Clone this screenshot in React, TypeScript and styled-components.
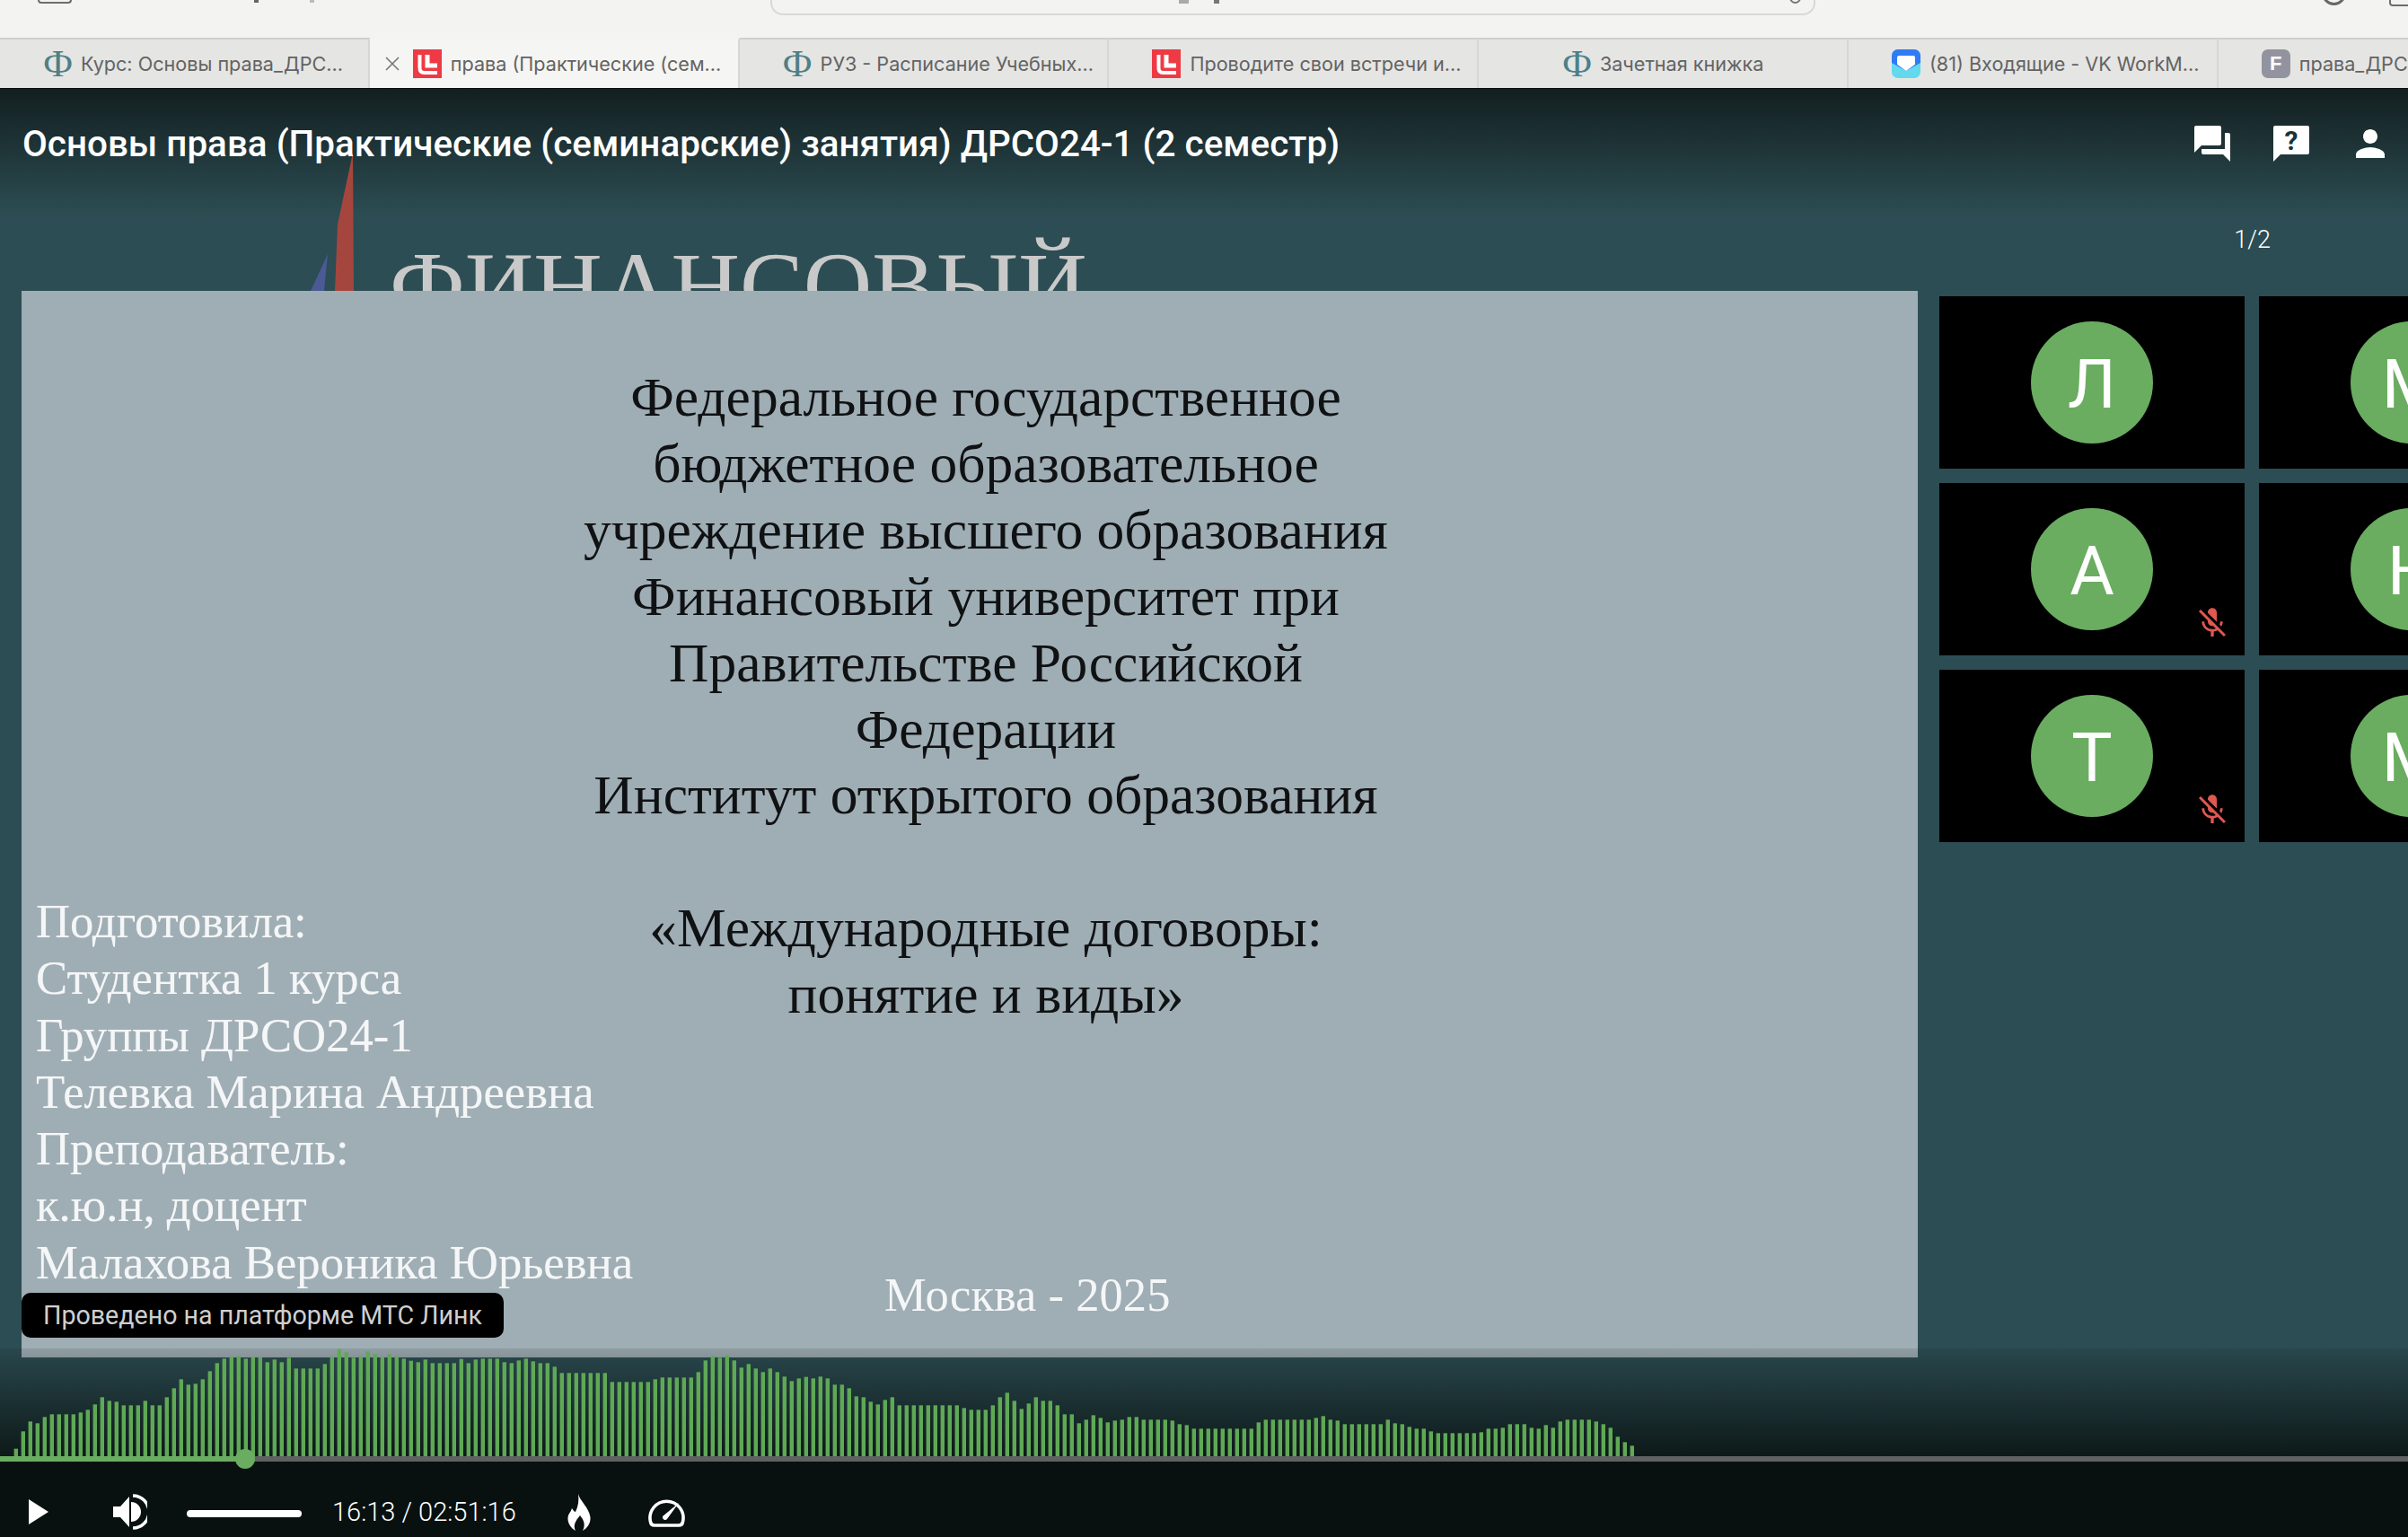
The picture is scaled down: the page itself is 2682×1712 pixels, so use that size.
import React from "react";
import styled, { createGlobalStyle } from "styled-components";
import { MdForum, MdPerson, MdMicOff } from "react-icons/md";

const Global = createGlobalStyle`
  html, body { margin: 0; padding: 0; width: 2682px; height: 1712px; overflow: hidden; background: #2c4c52; }
  * { box-sizing: border-box; }
`;

const Page = styled.div`
  width: 2682px;
  height: 1712px;
  display: flex;
  flex-direction: column;
  overflow: hidden;
  font-family: Roboto, "Liberation Sans", sans-serif;
`;

/* browser chrome */
const Chrome = styled.header`
  flex: 0 0 99px;
  display: flex;
  flex-direction: column;
  background: #f3f3f1;
  border-bottom: 1px solid #0b0f0f;
`;
const Toolbar = styled.div`
  flex: 0 0 42px;
  display: flex;
  align-items: flex-start;
  position: relative;
  overflow: hidden;
`;
const SidebarStub = styled.span`
  flex: none;
  width: 38px;
  height: 4px;
  margin-left: 42px;
  border: 2px solid #6d6d6d;
  border-top: 0;
  border-radius: 0 0 4px 4px;
`;
const Chevron = styled.span<{ $gap: number; $c: string }>`
  flex: none;
  width: 5px;
  height: 3px;
  margin-left: ${(p) => p.$gap}px;
  background: ${(p) => p.$c};
`;
const UrlBar = styled.div`
  flex: none;
  width: 1164px;
  height: 17px;
  margin-left: 508px;
  border: 2px solid #d8d8d6;
  border-top: 0;
  border-radius: 0 0 14px 14px;
  display: flex;
  align-items: flex-start;
  position: relative;
`;
const UrlBit = styled.span<{ $x: number; $w: number; $h: number; $c: string }>`
  position: absolute;
  left: ${(p) => p.$x}px;
  top: 0;
  width: ${(p) => p.$w}px;
  height: ${(p) => p.$h}px;
  background: ${(p) => p.$c};
`;
const Reload = styled.span`
  position: absolute;
  right: 14px;
  top: -9px;
  width: 13px;
  height: 13px;
  border: 2px solid #777;
  border-radius: 50%;
`;
const RoundStub = styled.span`
  flex: none;
  width: 27px;
  height: 27px;
  margin-top: -21px;
  margin-left: 564px;
  border: 3px solid #666;
  border-radius: 50%;
`;
const BoxStub = styled.span`
  flex: none;
  width: 40px;
  height: 7px;
  margin-left: 48px;
  border: 2px solid #6d6d6d;
  border-top: 0;
  border-radius: 0 0 4px 4px;
`;
const TabStrip = styled.nav`
  flex: 1;
  display: flex;
`;
const Tab = styled.div<{ $active?: boolean; $center?: boolean }>`
  flex: 0 0 411.8px;
  display: flex;
  align-items: center;
  justify-content: ${(p) => (p.$center ? "center" : "flex-start")};
  padding-left: ${(p) => (p.$center ? 0 : p.$active ? 17 : 48)}px;
  gap: 10px;
  background: ${(p) => (p.$active ? "#f5f5f3" : "#e5e5e3")};
  border-top: 2px solid ${(p) => (p.$active ? "#f3f3f1" : "#cfcfcd")};
  border-right: 2px solid #d6d6d4;
  color: #636363;
  font-family: Inter, Roboto, sans-serif;
  font-size: 21.6px;
  white-space: nowrap;
`;
const CloseMark = styled.svg`
  width: 16px;
  height: 16px;
  margin-right: 5px;
  flex: none;
`;
const PhiIcon = styled.span`
  width: 32px;
  text-align: center;
  flex: none;
  font-family: "Liberation Serif", serif;
  font-size: 42px;
  line-height: 32px;
  color: #4d8087;
`;
const SquareIcon = styled.svg`
  width: 32px;
  height: 32px;
  flex: none;
`;
const LetterIcon = styled.span`
  width: 32px;
  height: 32px;
  flex: none;
  border-radius: 7px;
  background: #9393a0;
  color: #fff;
  font-family: "Liberation Sans", sans-serif;
  font-weight: 700;
  font-size: 22px;
  display: flex;
  align-items: center;
  justify-content: center;
`;

/* player */
const Player = styled.main`
  flex: 1;
  display: flex;
  flex-direction: column;
  position: relative;
  background: linear-gradient(#131f20 0, #2c4d53 141px, #2c4d53 100%);
`;
const LogoFlag = styled.svg`
  position: absolute;
  left: 340px;
  top: 60px;
  width: 60px;
  height: 170px;
`;
const LogoWord = styled.div`
  position: absolute;
  left: 434px;
  top: 155px;
  font-family: "Liberation Serif", serif;
  font-size: 106px;
  line-height: 130px;
  color: #c9c9c9;
  white-space: nowrap;
`;
const Header = styled.div`
  flex: 0 0 225px;
  display: grid;
  grid-template-rows: 122px 92px;
  position: relative;
`;
const TitleRow = styled.div`
  display: flex;
  align-items: center;
  justify-content: space-between;
  padding: 0 18px 0 25px;
`;
const Title = styled.h1`
  margin: 0;
  color: #fff;
  font-size: 40.4px;
  font-weight: 500;
  white-space: nowrap;
`;
const HeadIcons = styled.div`
  display: flex;
  gap: 40px;
  color: #fff;
  svg { display: block; width: 48px; height: 48px; }
`;
const PagerRow = styled.div`
  display: flex;
  align-items: center;
  justify-content: flex-end;
  padding-right: 153px;
  color: #fff;
  font-size: 27px;
  font-weight: 300;
`;
const Main = styled.div`
  flex: 0 0 1188px;
  display: flex;
  position: relative;
  padding-left: 24px;
`;
const Slide = styled.section`
  flex: 0 0 2112px;
  height: 1188px;
  background: #9fadb4;
  position: relative;
  display: grid;
  grid-template: 1fr / 1fr;
  font-family: "Liberation Serif", serif;
`;
const CenterText = styled.div`
  grid-area: 1 / 1;
  justify-self: start;
  width: 1000px;
  margin: 82px 0 0 574px;
  text-align: center;
  font-size: 61.5px;
  line-height: 73.9px;
  color: #0f1113;
`;
const Notes = styled.div`
  grid-area: 1 / 1;
  align-self: end;
  justify-self: start;
  margin: 0 0 74px 16px;
  font-size: 52.7px;
  line-height: 63.3px;
  color: #f4f6f7;
  text-shadow: 0 0 1px rgba(255, 255, 255, 0.4);
`;
const City = styled.div`
  grid-area: 1 / 1;
  align-self: end;
  justify-self: start;
  margin: 0 0 33px 961px;
  font-size: 52.6px;
  line-height: 74px;
  color: #f4f6f7;
`;
const Badge = styled.div`
  position: absolute;
  left: 0;
  bottom: 22px;
  height: 50px;
  padding: 0 24px;
  display: flex;
  align-items: center;
  background: #000;
  border-radius: 10px;
  color: #cfcfcf;
  font-family: Roboto, sans-serif;
  font-size: 28.6px;
  white-space: nowrap;
`;
const Side = styled.aside`
  flex: none;
  margin: 6px 0 0 24px;
  display: grid;
  grid-template-columns: 340px 340px;
  grid-auto-rows: 192px;
  gap: 16px;
`;
const VideoTile = styled.div`
  width: 340px;
  height: 192px;
  background: #000;
  position: relative;
  display: flex;
  align-items: center;
  justify-content: center;
`;
const Avatar = styled.div`
  width: 136px;
  height: 136px;
  padding-top: 3px;
  border-radius: 50%;
  background: #6aad61;
  color: #fff;
  font-family: Roboto, sans-serif;
  font-size: 76px;
  font-weight: 400;
  display: flex;
  align-items: center;
  justify-content: center;
`;
const Muted = styled.span`
  position: absolute;
  right: 16px;
  bottom: 16px;
  width: 40px;
  height: 40px;
  color: #e0584f;
  svg { display: block; width: 40px; height: 40px; }
`;

/* timeline */
const Timeline = styled.div`
  flex: 0 0 126px;
  margin-top: -10px;
  position: relative;
  display: flex;
  flex-direction: column;
  background: linear-gradient(rgba(9, 17, 16, 0.1), rgba(9, 17, 16, 0.9) 100%);
`;
const Wave = styled.svg`
  display: block;
  width: 1840px;
  height: 120px;
  flex: none;
`;
const Track = styled.div`
  height: 6px;
  flex: none;
  background: #606162;
  position: relative;
`;
const Played = styled.div`
  width: 273px;
  height: 6px;
  background: #6aad61;
`;
const Thumb = styled.span`
  position: absolute;
  left: 262px;
  top: -8px;
  width: 22px;
  height: 22px;
  border-radius: 50%;
  background: #6aad61;
`;

/* controls */
const Controls = styled.div`
  flex: 0 0 84px;
  background: #091110;
  display: flex;
  align-items: center;
  padding: 28px 0 0 32px;
  color: #fff;
`;
const PlayIcon = styled.svg`
  width: 22px;
  height: 28px;
  flex: none;
  margin-right: 70px;
`;
const VolumeIcon = styled.svg`
  width: 40px;
  height: 40px;
  flex: none;
  margin-right: 44px;
`;
const VolumeBar = styled.span`
  width: 128px;
  height: 8px;
  border-radius: 4px;
  background: #fff;
  flex: none;
  margin: 3px 34px 0 0;
`;
const Time = styled.span`
  font-size: 29px;
  font-weight: 300;
  width: 204px;
  flex: none;
  white-space: nowrap;
  margin-right: 58px;
`;
const FlameIcon = styled.svg`
  width: 26px;
  height: 41px;
  flex: none;
  margin-right: 64px;
`;
const GaugeIcon = styled.svg`
  width: 41px;
  height: 33px;
  flex: none;
`;

const tops = [
  640,582,549,555,534,525,525,525,525,519,510,492,468,480,483,495,495,495,480,495,495,468,438,408,426,423,408,381,354,339,333,331,339,335,335,351,342,351,336,372,372,372,372,357,333,307,318,336,333,315,324,335,324,333,339,346,351,342,354,354,354,354,340,354,342,339,339,339,351,354,345,339,348,354,354,366,387,387,387,387,387,387,387,417,417,417,417,417,417,408,402,402,402,402,402,384,345,330,336,328,345,369,357,372,384,372,384,399,414,405,400,
  405,399,405,426,426,438,465,468,483,492,477,468,495,495,495,495,495,495,495,495,495,504,510,510,510,495,468,453,480,507,489,468,480,480,495,525,525,555,543,528,537,552,546,543,534,534,543,543,543,543,546,558,561,573,573,573,573,573,573,573,573,573,552,543,543,543,543,543,543,543,537,531,543,546,558,558,558,558,558,558,543,555,558,567,573,573,582,588,588,588,588,588,588,585,573,573,570,558,558,558,570,573,561,570,549,543,543,543,543,549,558,570,600,618,630,
];

const phi = <PhiIcon>Ф</PhiIcon>;
const red = (
  <SquareIcon viewBox="0 0 32 32">
    <rect width="32" height="32" fill="#ee3a44" />
    <path d="M7.5 6v15q0 5 5 5H27" fill="none" stroke="#fff" strokeWidth="4" />
    <path d="M16 6v12h11" fill="none" stroke="#fff" strokeWidth="5" />
  </SquareIcon>
);
const vk = (
  <SquareIcon viewBox="0 0 32 32">
    <rect width="32" height="32" rx="7" fill="#62d9ee" />
    <path d="M0 15V7a7 7 0 0 1 7-7h18a7 7 0 0 1 7 7v8l-16 9z" fill="#2f7bf6" />
    <path d="M8 7h16a2 2 0 0 1 2 2v7q0 1-1 1.6L16 24l-9-6.4Q6 17 6 16V9a2 2 0 0 1 2-2z" fill="#fff" />
  </SquareIcon>
);

const names: [string, string][] = [
  ["Л", "М"],
  ["А", "Н"],
  ["Т", "М"],
];

export default function App() {
  return (
    <Page>
      <Global />
      <Chrome>
        <Toolbar>
          <SidebarStub />
          <Chevron $gap={203} $c="#666" />
          <Chevron $gap={57} $c="#bbb" />
          <UrlBar>
            <UrlBit $x={453} $w={11} $h={4} $c="#aaa" />
            <UrlBit $x={492} $w={6} $h={4} $c="#777" />
            <Reload />
          </UrlBar>
          <RoundStub />
          <BoxStub />
        </Toolbar>
        <TabStrip>
          <Tab>{phi}<span>Курс: Основы права_ДРС...</span></Tab>
          <Tab $active>
            <CloseMark viewBox="0 0 16 16">
              <path d="M1 1l14 14M15 1L1 15" stroke="#777" strokeWidth="1.6" />
            </CloseMark>
            {red}
            <span>права (Практические (сем...</span>
          </Tab>
          <Tab>{phi}<span>РУЗ - Расписание Учебных...</span></Tab>
          <Tab>{red}<span>Проводите свои встречи и...</span></Tab>
          <Tab $center>{phi}<span>Зачетная книжка</span></Tab>
          <Tab>{vk}<span>(81) Входящие - VK WorkM...</span></Tab>
          <Tab><LetterIcon>F</LetterIcon><span>права_ДРСО24-1</span></Tab>
        </TabStrip>
      </Chrome>

      <Player>
        <LogoFlag viewBox="0 0 60 170">
          <polygon points="53,11 36,91 33,165 54,165" fill="#a5463e" />
          <polygon points="25,124 6,165 21,165" fill="#4a5a94" />
        </LogoFlag>
        <LogoWord>ФИНАНСОВЫЙ</LogoWord>
        <Header>
          <TitleRow>
            <Title>Основы права (Практические (семинарские) занятия) ДРСО24-1 (2 семестр)</Title>
            <HeadIcons>
              <MdForum />
              <svg viewBox="0 0 48 48">
                <path d="M6 4h36a2 2 0 0 1 2 2v28a2 2 0 0 1-2 2H12l-8 8V6a2 2 0 0 1 2-2z" fill="#fff" />
                <text x="24" y="31" textAnchor="middle" fontFamily="Roboto, sans-serif" fontWeight="700" fontSize="30" fill="#1c3236">?</text>
              </svg>
              <MdPerson />
            </HeadIcons>
          </TitleRow>
          <PagerRow>1/2</PagerRow>
        </Header>
        <Main>
          <Slide>
            <CenterText>
              Федеральное государственное<br />
              бюджетное образовательное<br />
              учреждение высшего образования<br />
              Финансовый университет при<br />
              Правительстве Российской<br />
              Федерации<br />
              Институт открытого образования<br />
              <br />
              «Международные договоры:<br />
              понятие и виды»
            </CenterText>
            <Notes>
              Подготовила:<br />
              Студентка 1 курса<br />
              Группы ДРСО24-1<br />
              Телевка Марина Андреевна<br />
              Преподаватель:<br />
              к.ю.н, доцент<br />
              Малахова Вероника Юрьевна
            </Notes>
            <City>Москва - 2025</City>
            <Badge>Проведено на платформе МТС Линк</Badge>
          </Slide>
          <Side>
            {names.map(([a, b], i) => (
              <React.Fragment key={i}>
                <VideoTile>
                  <Avatar>{a}</Avatar>
                  {i > 0 && <Muted><MdMicOff /></Muted>}
                </VideoTile>
                <VideoTile>
                  <Avatar>{b}</Avatar>
                </VideoTile>
              </React.Fragment>
            ))}
          </Side>
        </Main>
        <Timeline>
          <Wave viewBox="0 0 1840 120">
            {tops.map((t, i) => {
              const h = (665 - t) / 3;
              return <rect key={i} x={15.6 + i * 8} y={120 - h} width={4.4} height={h} fill="#5fa955" />;
            })}
          </Wave>
          <Track>
            <Played />
            <Thumb />
          </Track>
        </Timeline>
        <Controls>
          <PlayIcon viewBox="0 0 22 28"><polygon points="0,0 22,14 0,28" fill="#fff" /></PlayIcon>
          <VolumeIcon viewBox="0 0 40 40">
            <polygon points="2,14 10,14 20,3 20,37 10,26 2,26" fill="#fff" />
            <path d="M22 9a11 11 0 0 1 0 22z" fill="#fff" />
            <path d="M24 2a18 18 0 0 1 0 36" fill="none" stroke="#fff" strokeWidth="3.5" />
          </VolumeIcon>
          <VolumeBar />
          <Time>16:13 / 02:51:16</Time>
          <FlameIcon viewBox="0 0 26 41">
            <path d="M12 0C14 8 24 15 25.500 26C26 33 22 38 17 41C20 35 19 30 14 24C9 30 6 35 9 41C4 38 0 33 .5 26C1 22 4 20 5 16C7 19 8 20 9 20C12 14 13 7 12 0Z" fill="#fff" />
          </FlameIcon>
          <GaugeIcon viewBox="0 0 41 33">
            <path d="M7 31h27q4 0 4.500-4A18.500 18.500 0 1 0 2.500 27q.5 4 4.500 4z" fill="none" stroke="#fff" strokeWidth="3.600" />
            <path d="M34 6L21 24a3 3 0 0 1-5-3z" fill="#fff" />
          </GaugeIcon>
        </Controls>
      </Player>
    </Page>
  );
}
